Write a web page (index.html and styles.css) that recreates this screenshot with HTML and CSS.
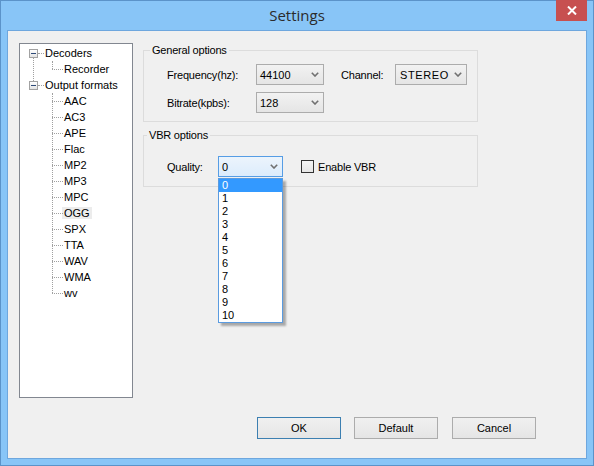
FILE: index.html
```html
<!DOCTYPE html>
<html lang="en">
<head>
    <meta charset="UTF-8">
    <title>Settings</title>
    <link rel="stylesheet" href="styles.css">
</head>
<body>
    <div class="window">
        <div class="titlebar">
            Settings
            <span class="close">
                <svg width="10" height="9" viewBox="0 0 10 9"><path d="M1 0.5 L9 8.5 M9 0.5 L1 8.5" stroke="#fff" stroke-width="2"/></svg>
            </span>
        </div>
        <div class="client">
            <div class="main">
                <div class="tree-box">
                    <ul class="tree">
                        <li class="node"><span class="toggle"></span>Decoders
                            <ul class="children">
                                <li>Recorder</li>
                            </ul>
                        </li>
                        <li class="node last"><span class="toggle"></span>Output formats
                            <ul class="children">
                                <li>AAC</li>
                                <li>AC3</li>
                                <li>APE</li>
                                <li>Flac</li>
                                <li>MP2</li>
                                <li>MP3</li>
                                <li>MPC</li>
                                <li><span class="selected">OGG</span></li>
                                <li>SPX</li>
                                <li>TTA</li>
                                <li>WAV</li>
                                <li>WMA</li>
                                <li>wv</li>
                            </ul>
                        </li>
                    </ul>
                </div>

                <div class="options">
                    <fieldset class="group general">
                        <legend>General options</legend>
                        <div class="row">
                            <span class="lbl freq">Frequency(hz):</span>
                            <div class="combo w68">44100<svg class="chev" width="8" height="5" viewBox="0 0 8 5"><path d="M0.8 0.8 L4 4 L7.2 0.8" fill="none" stroke="#707070" stroke-width="1.6"/></svg></div>
                            <span class="lbl channel">Channel:</span>
                            <div class="combo w72 stereo">STEREO<svg class="chev" width="8" height="5" viewBox="0 0 8 5"><path d="M0.8 0.8 L4 4 L7.2 0.8" fill="none" stroke="#707070" stroke-width="1.6"/></svg></div>
                        </div>
                        <div class="row">
                            <span class="lbl freq">Bitrate(kpbs):</span>
                            <div class="combo w68">128<svg class="chev" width="8" height="5" viewBox="0 0 8 5"><path d="M0.8 0.8 L4 4 L7.2 0.8" fill="none" stroke="#707070" stroke-width="1.6"/></svg></div>
                        </div>
                    </fieldset>

                    <fieldset class="group vbr">
                        <legend>VBR options</legend>
                        <div class="row">
                            <span class="lbl quality">Quality:</span>
                            <div class="combo w65 open">0<svg class="chev" width="8" height="5" viewBox="0 0 8 5"><path d="M0.8 0.8 L4 4 L7.2 0.8" fill="none" stroke="#707070" stroke-width="1.6"/></svg>
                                <ul class="droplist">
                                    <li class="hl">0</li>
                                    <li>1</li>
                                    <li>2</li>
                                    <li>3</li>
                                    <li>4</li>
                                    <li>5</li>
                                    <li>6</li>
                                    <li>7</li>
                                    <li>8</li>
                                    <li>9</li>
                                    <li>10</li>
                                </ul>
                            </div>
                            <span class="checkbox"></span>
                            <span class="lbl">Enable VBR</span>
                        </div>
                    </fieldset>
                </div>
            </div>

            <div class="buttons">
                <button class="btn default-btn">OK</button>
                <button class="btn">Default</button>
                <button class="btn cancel">Cancel</button>
            </div>
        </div>
    </div>
</body>
</html>
```

FILE: styles.css
```css
body {
    margin: 0;
    padding: 0;
    font-family: "Liberation Sans", Arial, sans-serif;
    font-size: 11px;
    color: #000;
}
.window {
    width: 594px;
    height: 466px;
    box-sizing: border-box;
    border: 1px solid #5b93c9;
    background-color: #88c5f7;
}
.titlebar {
    position: relative;
    height: 29px;
    line-height: 28px;
    text-align: center;
    font-family: "Open Sans", "Noto Sans", sans-serif;
    font-size: 15px;
    color: #2b2b2b;
}
.close {
    position: absolute;
    top: -1px;
    right: 6px;
    width: 31px;
    height: 21px;
    background-color: #c75050;
    display: flex;
    align-items: center;
    justify-content: center;
}
.client {
    margin: 0 6px;
    height: 429px;
    box-sizing: border-box;
    border: 1px solid #6ea7de;
    background-color: #f0f0f0;
    padding: 12px 0 0 11px;
}
.main {
    display: flex;
    height: 355px;
}

/* arvore da esquerda */
.tree-box {
    width: 114px;
    box-sizing: border-box;
    border: 1px solid #828790;
    background-color: #fff;
}
.tree, .children {
    list-style: none;
    margin: 0;
    padding: 0;
}
.tree {
    padding-top: 1px;
}
.tree li {
    position: relative;
    line-height: 16px;
    white-space: nowrap;
}
.node {
    padding-left: 25px;
}
.node:not(.last)::after {
    content: "";
    position: absolute;
    left: 13px;
    top: 13px;
    bottom: -4px;
    border-left: 1px dotted #a0a0a0;
}
.toggle {
    position: absolute;
    left: 9px;
    top: 4px;
    width: 9px;
    height: 9px;
    box-sizing: border-box;
    border: 1px solid #a2a2a2;
    background: linear-gradient(#ffffff, #e3e3e3);
}
.toggle::before {
    content: "";
    position: absolute;
    left: 1px;
    top: 3px;
    width: 5px;
    height: 1px;
    background-color: #2d4a78;
}
.toggle::after {
    content: "";
    position: absolute;
    left: 8px;
    top: 3px;
    width: 6px;
    border-top: 1px dotted #a0a0a0;
}
.children {
    position: relative;
    margin-left: -25px;
}
.children::before {
    content: "";
    position: absolute;
    left: 32px;
    top: 0;
    bottom: 8px;
    border-left: 1px dotted #a0a0a0;
}
.children li {
    padding-left: 44px;
}
.children li::before {
    content: "";
    position: absolute;
    left: 32px;
    top: 8px;
    width: 11px;
    border-top: 1px dotted #a0a0a0;
}
.selected {
    background-color: #ececec;
    padding: 0 2px;
    margin-left: -2px;
}

/* grupos */
.options {
    margin-left: 10px;
}
.group {
    margin: 0;
    width: 335px;
    box-sizing: border-box;
    border: 1px solid #dcdcdc;
    padding: 7px 0 8px 6px;
    min-width: 0;
}
.group legend {
    padding: 0 2px;
    line-height: 14px;
    letter-spacing: -0.2px;
}
.vbr {
    margin-top: 6px;
    padding: 14px 0 9px 3px;
}
.row {
    display: flex;
    align-items: center;
    height: 21px;
    margin-left: 17px;
}
.row + .row {
    margin-top: 7px;
}
.vbr .row {
    margin-left: 20px;
}
.lbl {
    letter-spacing: -0.2px;
}
.freq {
    width: 89px;
}
.channel {
    width: 54px;
    margin-left: 17px;
}
.quality {
    width: 51px;
}

/* combos */
.combo {
    position: relative;
    display: flex;
    align-items: center;
    height: 21px;
    box-sizing: border-box;
    border: 1px solid #acacac;
    background: linear-gradient(#f2f2f2, #e5e5e5);
    padding: 0 4px 0 3px;
}
.combo .chev {
    margin-left: auto;
}
.w68 { width: 68px; }
.w72 { width: 72px; }
.w65 { width: 65px; }
.stereo {
    padding-left: 4px;
    letter-spacing: 0.6px;
}
.combo.open {
    border-color: #569de5;
    background: linear-gradient(#ecf4fc, #dcecfc);
}
.droplist {
    position: absolute;
    left: -1px;
    top: 21px;
    width: 65px;
    box-sizing: border-box;
    margin: 0;
    padding: 0;
    list-style: none;
    border: 1px solid #5a9be0;
    background-color: #fff;
    box-shadow: 3px 3px 2px rgba(0, 0, 0, 0.3);
    z-index: 2;
}
.droplist li {
    height: 13px;
    line-height: 13px;
    padding-left: 3px;
}
.droplist .hl {
    background-color: #3399ff;
    color: #fff;
}
.checkbox {
    width: 13px;
    height: 13px;
    box-sizing: border-box;
    border: 1px solid #333;
    background: linear-gradient(#f6f6f6, #e6e6e6);
    margin: 0 4px 0 18px;
}

/* botoes */
.buttons {
    display: flex;
    justify-content: flex-end;
    margin-top: 19px;
    padding-right: 50px;
    gap: 13px;
}
.btn {
    width: 84px;
    height: 22px;
    margin: 0;
    padding: 0;
    border: 1px solid #acacac;
    background: linear-gradient(#f0f0f0, #e5e5e5);
    font-family: "Liberation Sans", Arial, sans-serif;
    font-size: 11px;
    color: #000;
}
.default-btn {
    border-color: #3c7fb1;
}
.cancel {
    margin-left: 1px;
}
```
